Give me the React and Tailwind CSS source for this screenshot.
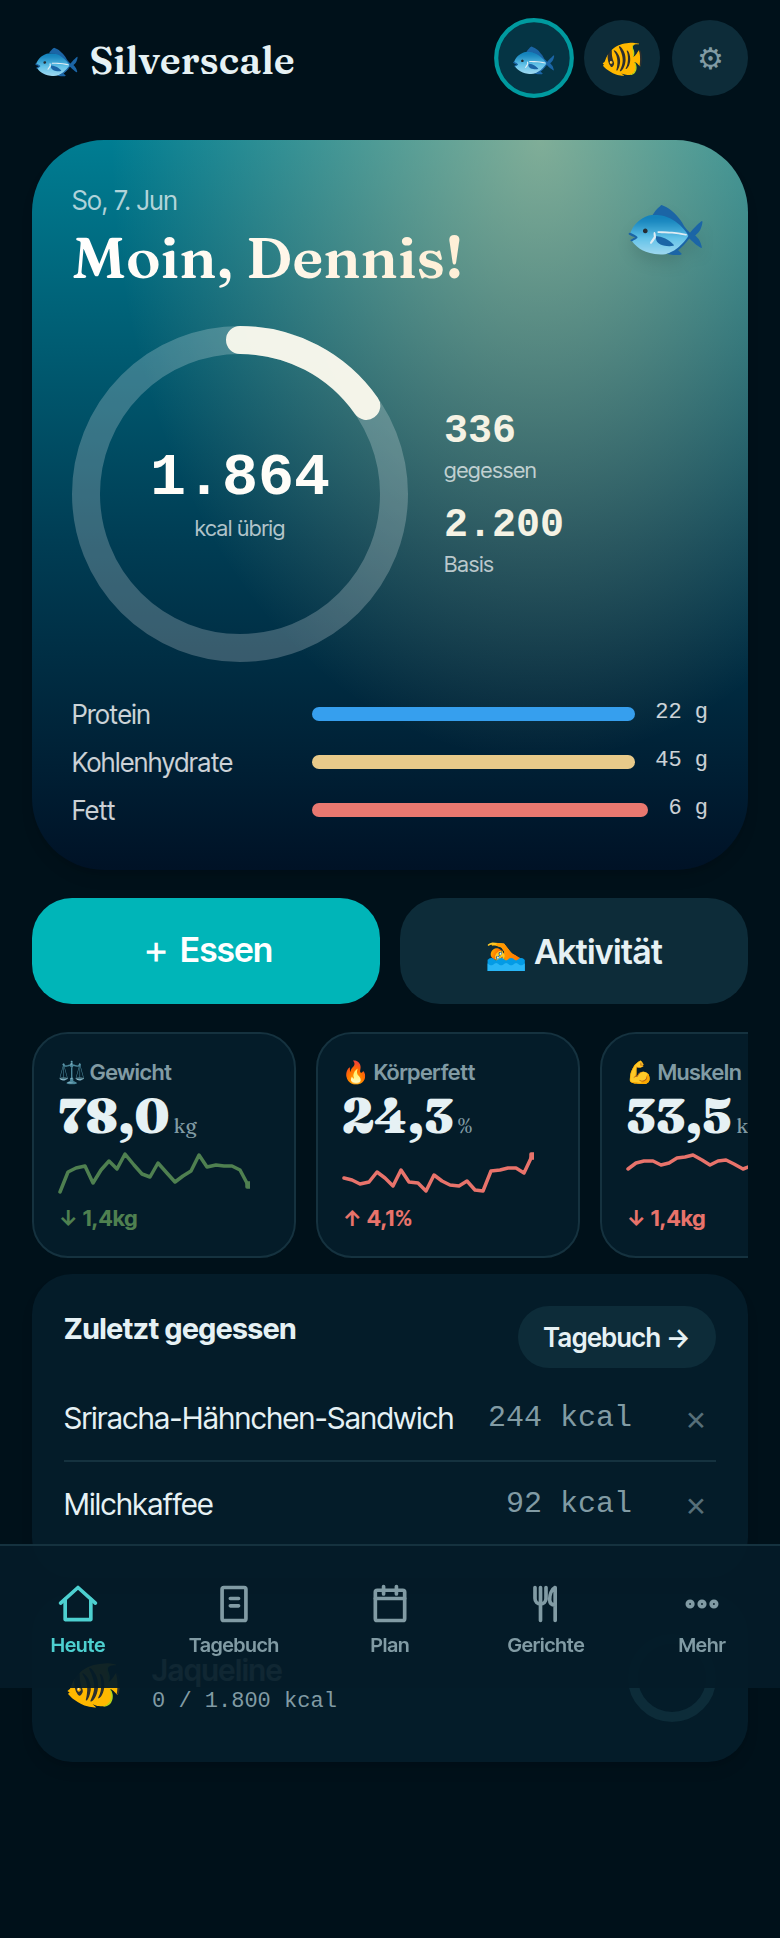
import React from 'react'

const macros = [
    { label: 'Protein', value: '22 g', color: 'bg-[#369fee]' },
    { label: 'Kohlenhydrate', value: '45 g', color: 'bg-[#e8ca8a]' },
    { label: 'Fett', value: '6 g', color: 'bg-[#e87870]' },
]

const metrics = [
    {
        icon: '⚖️', label: 'Gewicht', value: '78,0', unit: 'kg', delta: '↓ 1,4kg', color: 'text-[#4f8050]',
        points: '2,40 10,20 18,16 27,14 35,31 43,18 51,9 59,17 67,2 76,13 84,22 92,25 100,11 108,20 117,30 125,24 133,19 141,3 149,15 158,13 166,14 174,14 182,18 190,33',
        end: [190, 33],
    },
    {
        icon: '🔥', label: 'Körperfett', value: '24,3', unit: '%', delta: '↑ 4,1%', color: 'text-[#e8736b]',
        points: '2,26 10,28 18,32 27,30 35,20 43,26 51,34 59,18 67,30 76,31 84,39 92,23 100,29 108,33 117,34 125,29 133,38 141,39 149,19 158,18 166,16 174,16 182,21 190,4',
        end: [190, 4],
    },
    {
        icon: '💪', label: 'Muskeln', value: '33,5', unit: 'kg', delta: '↓ 1,4kg', color: 'text-[#e8736b]',
        points: '2,17 10,11 18,9 27,9 35,13 43,11 51,6 59,5 67,3 76,8 84,13 92,9 100,8 108,12 117,17 125,14 133,10 141,12 149,15 158,13 166,17 174,20 182,22 190,24',
        end: [190, 24],
    },
]

const meals = [
    { name: 'Sriracha-Hähnchen-Sandwich', kcal: '244 kcal' },
    { name: 'Milchkaffee', kcal: '92 kcal' },
]

const HomeIcon = () => <><path d="M2.500 11.500 12 3l9.500 8.500" /><path d="M5 9.500V20.500h14V9.500" /></>
const BookIcon = () => <><rect x="5.500" y="3" width="13" height="18" rx="1" /><path d="M10 9h4.500M10 13h4.500" /></>
const PlanIcon = () => <><rect x="4" y="4.500" width="16" height="16.500" rx="1" /><path d="M4 9h16M8.500 2.500v4M15.500 2.500v4" /></>
const DishIcon = () => <><path d="M6 3v6a3 3 0 0 0 6 0V3M9 3v18M17 21V3c-2 1-3 4-3 6.500 0 2 1 3 3 3" /></>
const MoreIcon = () => <><circle cx="5.500" cy="12" r="1.500" /><circle cx="12" cy="12" r="1.500" /><circle cx="18.500" cy="12" r="1.500" /></>

const tabs = [
    { label: 'Heute', Icon: HomeIcon },
    { label: 'Tagebuch', Icon: BookIcon },
    { label: 'Plan', Icon: PlanIcon },
    { label: 'Gerichte', Icon: DishIcon },
    { label: 'Mehr', Icon: MoreIcon },
]


const Header = () => (

    <header className="flex items-center justify-between px-8 pt-5 pb-11">

        <h1 className="pt-1 font-['Fraunces','Liberation_Serif',serif] text-[39px] leading-[48px] font-semibold">🐟 Silverscale</h1>

        <div className="flex gap-3">
            <button aria-label="Dennis" className="size-[76px] scale-105 rounded-full border-4 border-[#009a9f] bg-[#053444] text-[36px]">🐟</button>
            <button aria-label="Jaqueline" className="size-[76px] rounded-full bg-[#0d2c39] text-[36px]">🐠</button>
            <button aria-label="Einstellungen" className="size-[76px] rounded-full bg-[#0d2c39] text-[30px] text-[#819ba4]">⚙</button>
        </div>

    </header>

)


const Hero = () => (

    <section className="rounded-[72px] bg-[radial-gradient(60%_85%_at_71%_0%,rgba(255,222,158,0.5),rgba(255,222,158,0)),linear-gradient(180deg,#007d92_0%,#003d54_55%,#001226_100%)] p-10 shadow-lg">

        <div className="flex items-start justify-between">

            <div>
                <p className="text-[26px] leading-[42px] text-white/70">So, 7. Jun</p>
                <h2 className="bg-linear-to-r from-white to-[#ffefd6] bg-clip-text font-['Fraunces','Liberation_Serif',serif] text-[58px] leading-[70px] font-semibold text-transparent">Moin, Dennis!</h2>
            </div>

            <span className="mt-2 text-[68px] leading-[76px] drop-shadow-xl">🐟</span>

        </div>

        <div className="mt-[34px] flex items-center gap-9">

            <div className="relative size-[336px] shrink-0">
                <svg viewBox="0 0 336 336" className="size-full -rotate-90" fill="none" strokeWidth="28">
                    <circle cx="168" cy="168" r="154" stroke="white" strokeOpacity="0.22" />
                    <circle cx="168" cy="168" r="154" stroke="#fffcf0" strokeOpacity="0.93" strokeLinecap="round" pathLength="100" strokeDasharray="15.3 100" />
                </svg>
                <div className="absolute inset-0 flex flex-col items-center justify-center pt-1">
                    <p className="font-['Liberation_Mono',monospace] text-[60px] leading-[60px] font-bold text-[#fffdf8]">1.864</p>
                    <p className="mt-1 text-[22px] leading-8 text-white/70">kcal übrig</p>
                </div>
            </div>

            <div className="flex flex-col gap-[18px] pt-0.5">
                <div>
                    <p className="font-['Liberation_Mono',monospace] text-[40px] leading-[44px] font-bold text-[#f5f2e4]">336</p>
                    <p className="text-[22px] leading-8 text-white/70">gegessen</p>
                </div>
                <div>
                    <p className="font-['Liberation_Mono',monospace] text-[40px] leading-[44px] font-bold text-[#f5f2e4]">2.200</p>
                    <p className="text-[22px] leading-8 text-white/70">Basis</p>
                </div>
            </div>

        </div>

        <div className="mt-8 flex flex-col gap-2">
            {macros.map((macro) => (
                <div key={macro.label} className="flex h-10 items-center gap-5">
                    <p className="w-[220px] text-[26px] text-white/80">{macro.label}</p>
                    <div className={`h-3.5 flex-1 rounded-full ${macro.color}`} />
                    <p className="self-start font-['Liberation_Mono',monospace] text-[22px] leading-[38px] text-white/80">{macro.value}</p>
                </div>
            ))}
        </div>

    </section>

)


const MetricCard = ({ metric }) => (

    <article className="h-[226px] w-[264px] shrink-0 rounded-[36px] border-2 border-[#15323f] bg-[#041c29] px-6 py-5">

        <p className="text-[22px] leading-9 font-semibold text-[#819ba4]">{metric.icon} {metric.label}</p>

        <p className="flex items-baseline gap-1 font-['Fraunces','Liberation_Serif',serif] text-[48px] leading-[52px] font-extrabold">
            {metric.value}
            <span className="text-[20px] font-normal text-[#819ba4]">{metric.unit}</span>
        </p>

        <div className={metric.color}>
            <svg viewBox="0 0 192 44" className="h-11 w-48" fill="none" stroke="currentColor" strokeWidth="3.5" strokeLinejoin="round" strokeLinecap="round">
                <polyline points={metric.points} />
                <rect x={metric.end[0] - 1} y={metric.end[1] - 2} width="3" height="4" fill="currentColor" />
            </svg>
            <p className="mt-1 text-[22px] leading-9 font-bold">{metric.delta}</p>
        </div>

    </article>

)


const RecentMeals = () => (

    <section className="rounded-[40px] bg-[#041c29] p-8 shadow-lg">

        <div className="flex items-start justify-between">
            <h2 className="text-[29px] leading-[46px] font-bold">Zuletzt gegessen</h2>
            <button className="h-[62px] rounded-full bg-[#0d2c39] px-[26px] text-[26px] font-semibold">Tagebuch →</button>
        </div>

        <ul className="mt-2 divide-y-2 divide-[#15323f]">
            {meals.map((meal) => (
                <li key={meal.name} className="flex items-center py-[22px]">
                    <span className="flex-1 text-[30px] leading-10">{meal.name}</span>
                    <span className="font-['Liberation_Mono',monospace] text-[30px] leading-10 text-[#819ba4]">{meal.kcal}</span>
                    <button aria-label="Löschen" className="ml-11 w-10 text-[34px] leading-9 text-[#566f79]">×</button>
                </li>
            ))}
        </ul>

    </section>

)


const PartnerCard = () => (

    <section className="flex items-center rounded-[40px] bg-[#041c29] px-8 py-10 shadow-lg">

        <span className="w-[88px] pt-3 text-[48px] leading-[60px]">🐠</span>

        <div className="flex-1 pt-3">
            <p className="text-[30px] leading-9 font-semibold">Jaqueline</p>
            <p className="font-['Liberation_Mono',monospace] text-[22px] leading-7 text-[#819ba4]">0 / 1.800 kcal</p>
        </div>

        <svg viewBox="0 0 88 88" className="size-[88px]" fill="none" stroke="#0d2c39" strokeWidth="10">
            <circle cx="44" cy="44" r="39" />
        </svg>

    </section>

)


const TabBar = () => (

    <nav className="fixed inset-x-0 bottom-[250px] grid h-36 grid-cols-5 border-t-2 border-[#15323f] bg-[#041b28]/95">
        {tabs.map(({ label, Icon }, index) => (
            <a key={label} href="#" className={`flex flex-col items-center pt-9 ${index === 0 ? 'text-[#4dd0d0]' : 'text-[#819ba4]'}`}>
                <svg viewBox="0 0 24 24" className="size-11" fill="none" stroke="currentColor" strokeWidth="2" strokeLinecap="round" strokeLinejoin="round">
                    <Icon />
                </svg>
                <span className="mt-1 text-[20px] leading-[30px] font-semibold">{label}</span>
            </a>
        ))}
    </nav>

)


const App = () => {

  return (

    <div className="min-h-screen bg-[#00111a] font-['Inter_Tight','Inter',sans-serif] text-[#e6f1f4]">

        <Header />

        <main className="px-8">

            <Hero />

            <div className="mt-7 grid grid-cols-2 gap-5 text-[34px] font-semibold">
                <button className="h-[106px] rounded-[40px] bg-[#00b5b8] pb-1 text-white">＋ Essen</button>
                <button className="h-[106px] rounded-[40px] bg-[#0d2c39]">🏊 Aktivität</button>
            </div>

            <div className="mt-7 mb-4 flex gap-5 overflow-hidden">
                {metrics.map((metric) => <MetricCard key={metric.label} metric={metric} />)}
            </div>

            <div className="flex flex-col gap-4">
                <RecentMeals />
                <PartnerCard />
            </div>

        </main>

        <TabBar />

    </div>

  )

}


export default App
